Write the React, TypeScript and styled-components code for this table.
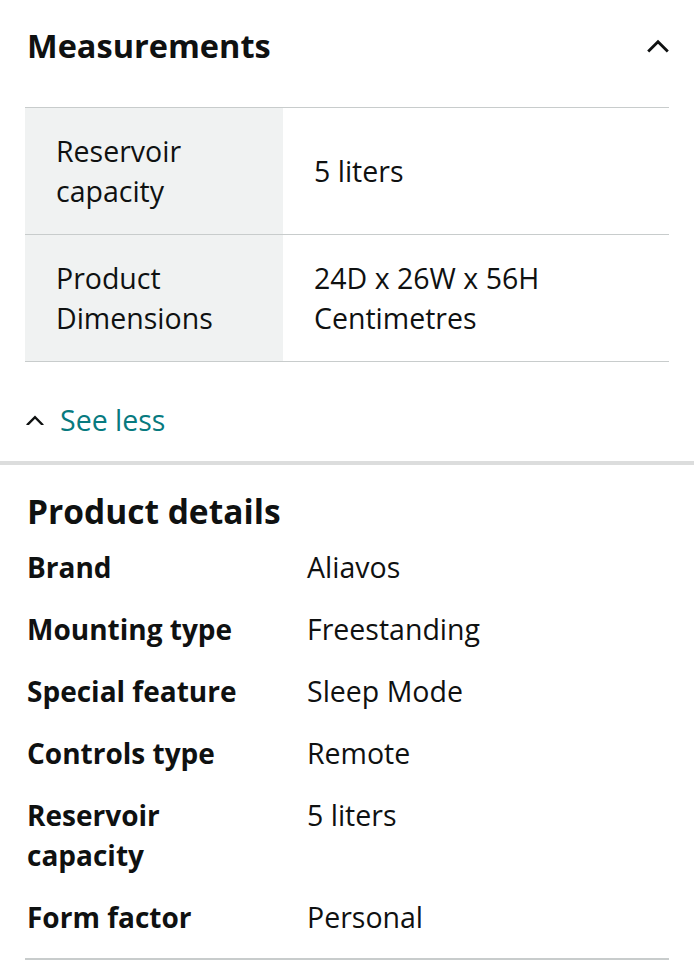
import React from "react";
import styled, { createGlobalStyle } from "styled-components";

const Global = createGlobalStyle`
  html, body { margin: 0; padding: 0; background: #ffffff; }
  body {
    font-family: "Open Sans", "Noto Sans", "Liberation Sans", sans-serif;
    color: #0f1111;
    -webkit-font-smoothing: antialiased;
  }
`;

const Page = styled.div`
  width: 694px;
  background: #fff;
`;

const SectionHeader = styled.div`
  height: 92px;
  display: flex;
  align-items: center;
  justify-content: space-between;
  padding: 0 24px 0 27px;
  box-sizing: border-box;
`;

const Title = styled.h2`
  margin: 0;
  font-size: 32.5px;
  font-weight: 700;
  line-height: 40px;
  color: #0f1111;
`;

const IconButton = styled.span`
  display: flex;
  width: 24px;
  height: 24px;
  align-items: center;
  justify-content: center;
`;

const Table = styled.div`
  margin: 15px 25px 0;
  border-top: 1px solid #c8cccc;
`;

const TableRow = styled.div`
  display: grid;
  grid-template-columns: 258px 1fr;
  border-bottom: 1px solid #c8cccc;
`;

const Cell = styled.div<{ $head?: boolean }>`
  background: ${(p) => (p.$head ? "#f0f2f2" : "#ffffff")};
  padding: 23px 24px 23px 31px;
  font-size: 28.5px;
  line-height: 40px;
  display: flex;
  align-items: center;
`;

const SeeLess = styled.div`
  display: flex;
  align-items: center;
  gap: 16px;
  padding: 38px 26px 21px;
  font-size: 28.5px;
  line-height: 40px;
  color: #077a7f;
`;

const Divider = styled.div`
  height: 4px;
  background: #dcdddd;
`;

const Details = styled.div`
  padding: 26px 25px 0 27px;
`;

const DetailsTitle = styled.h2`
  margin: 0 0 5px;
  font-size: 33.5px;
  font-weight: 700;
  line-height: 40px;
`;

const DetailRow = styled.div`
  display: grid;
  grid-template-columns: 280px 1fr;
  padding: 11px 0;
  line-height: 40px;
`;

const Label = styled.div`
  font-size: 28px;
  font-weight: 700;
  padding-right: 34px;
`;

const Value = styled.div`
  font-size: 28.5px;
  font-weight: 400;
`;

const BottomRule = styled.div`
  margin: 10px 25px 0;
  border-top: 2px solid #c8cccc;
`;

const Chevron = ({ size, stroke }: { size: number; stroke: number }) => (
  <svg width={size} height={size * 0.6} viewBox="0 0 20 12" fill="none">
    <path d="M2 10.5 L10 2.5 L18 10.5" stroke="#0f1111" strokeWidth={stroke} strokeLinecap="square" />
  </svg>
);

const measurements = [
  { k: "Reservoir capacity", v: "5 liters" },
  { k: "Product Dimensions", v: "24D x 26W x 56H Centimetres" },
];

const details = [
  { k: "Brand", v: "Aliavos" },
  { k: "Mounting type", v: "Freestanding" },
  { k: "Special feature", v: "Sleep Mode" },
  { k: "Controls type", v: "Remote" },
  { k: "Reservoir capacity", v: "5 liters" },
  { k: "Form factor", v: "Personal" },
];

export default function App() {
  return (
    <Page>
      <Global />
      <SectionHeader>
        <Title>Measurements</Title>
        <IconButton>
          <Chevron size={22} stroke={2.6} />
        </IconButton>
      </SectionHeader>
      <Table>
        {measurements.map((m) => (
          <TableRow key={m.k}>
            <Cell $head>{m.k}</Cell>
            <Cell>{m.v}</Cell>
          </TableRow>
        ))}
      </Table>
      <SeeLess>
        <Chevron size={18} stroke={2.6} />
        <span>See less</span>
      </SeeLess>
      <Divider />
      <Details>
        <DetailsTitle>Product details</DetailsTitle>
        {details.map((d) => (
          <DetailRow key={d.k}>
            <Label>{d.k}</Label>
            <Value>{d.v}</Value>
          </DetailRow>
        ))}
      </Details>
      <BottomRule />
    </Page>
  );
}
